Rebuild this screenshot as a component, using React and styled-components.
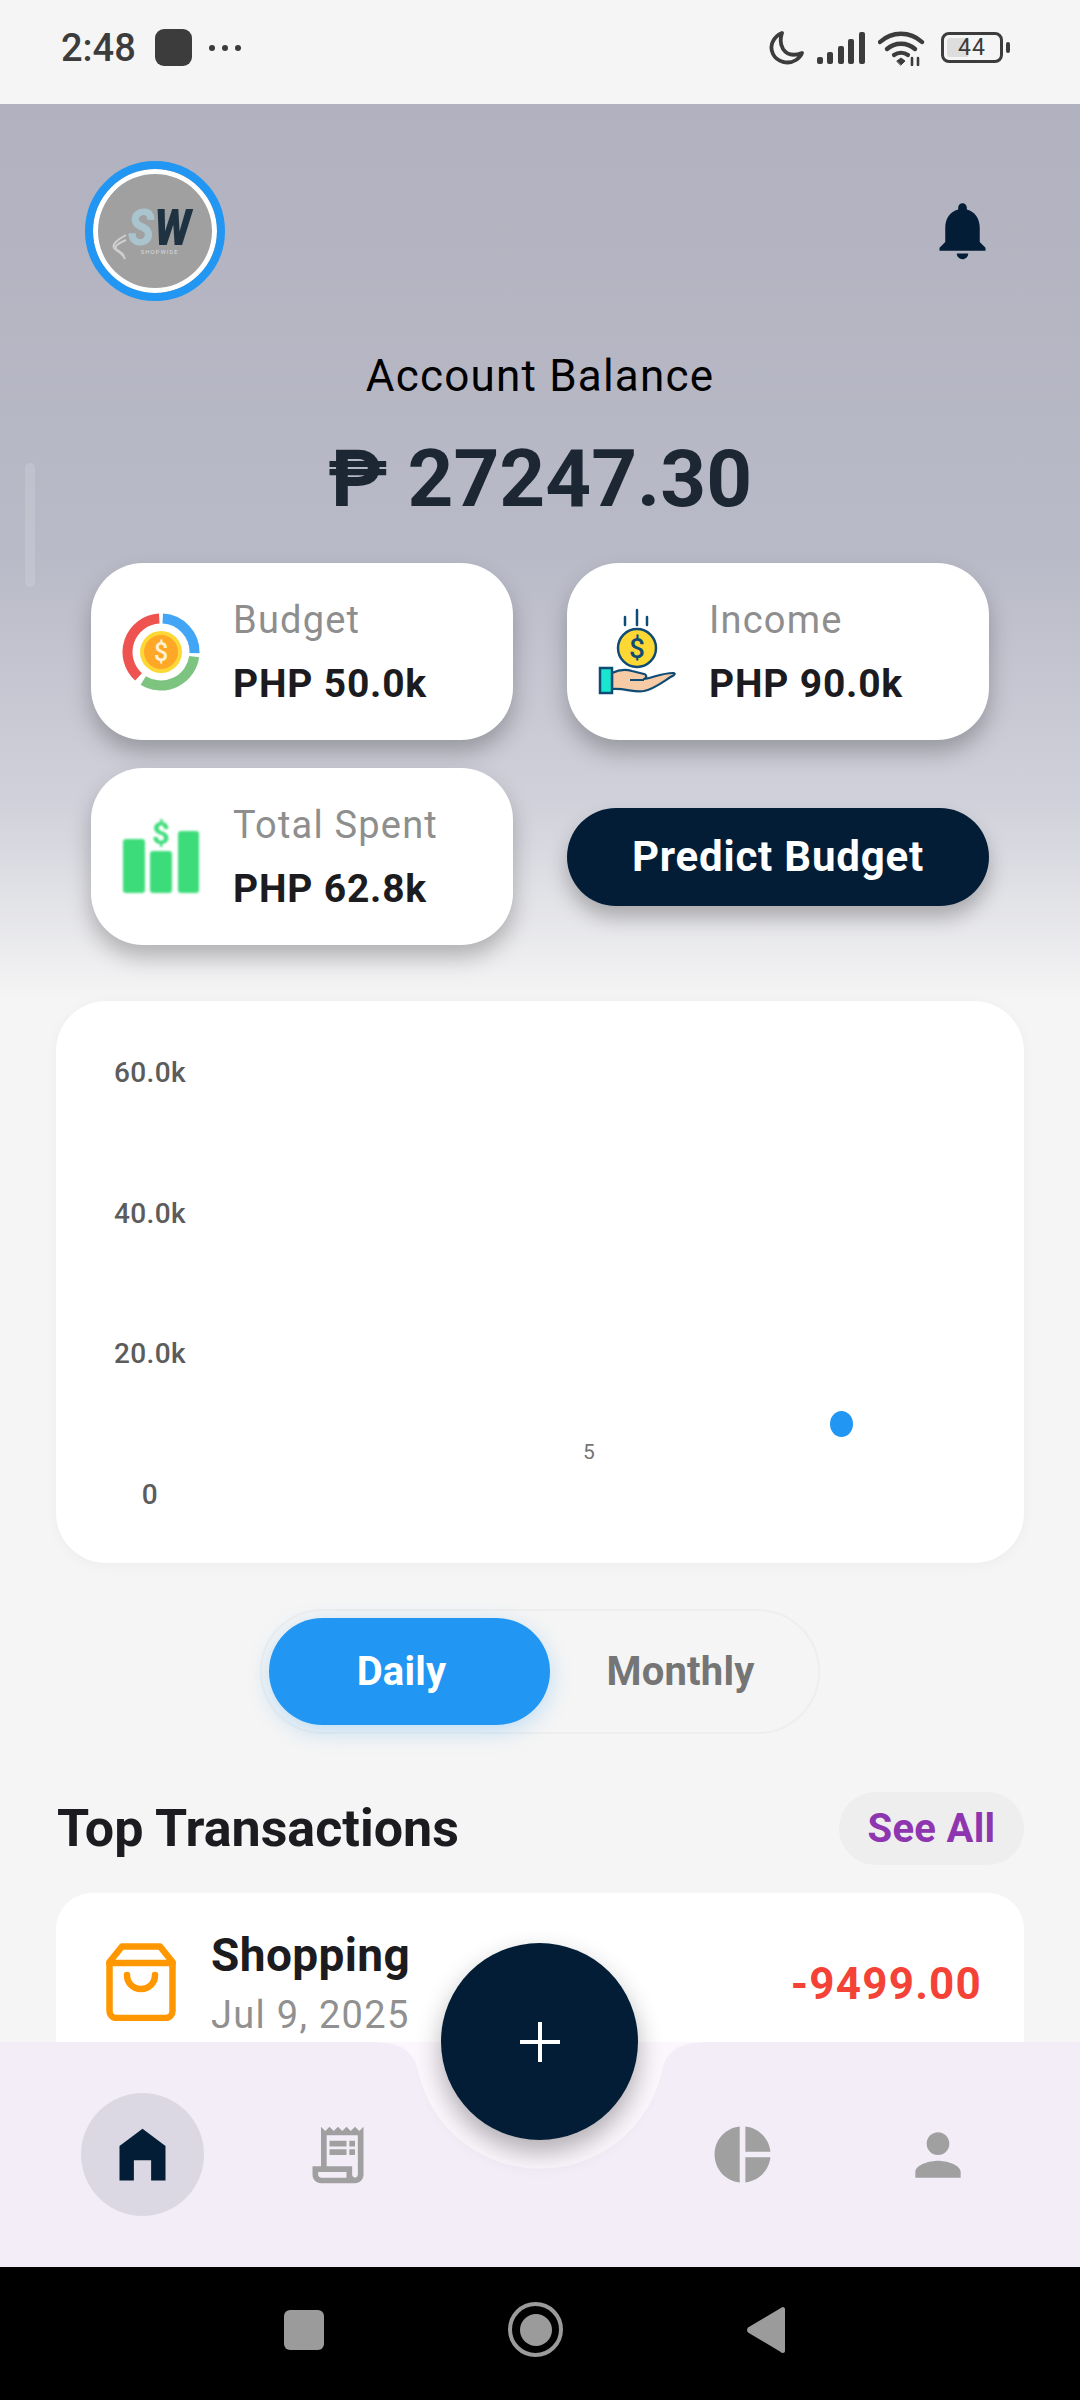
import React from "react";
import styled, { createGlobalStyle } from "styled-components";
import { MdOutlineReceiptLong, MdPieChart, MdPerson, MdNotifications } from "react-icons/md";

const GlobalStyle = createGlobalStyle`
  html, body {
    margin: 0;
    padding: 0;
    background: #f5f5f5;
  }
  * {
    box-sizing: border-box;
  }
`;

// polar arc helper for the budget donut
function arc(cx, cy, r, from, to) {
  const pt = (deg) => {
    const rad = ((deg - 90) * Math.PI) / 180;
    return [cx + r * Math.cos(rad), cy + r * Math.sin(rad)];
  };
  const [x1, y1] = pt(from);
  const [x2, y2] = pt(to);
  const large = to - from > 180 ? 1 : 0;
  return `M${x1} ${y1}A${r} ${r} 0 ${large} 1 ${x2} ${y2}`;
}

function BudgetIcon() {
  return (
    <svg width="78" height="78" viewBox="0 0 78 78">
      <path d={arc(39, 39, 33.5, 3, 92)} fill="none" stroke="#42a5f5" strokeWidth="10" />
      <path d={arc(39, 39, 33.5, 98, 212)} fill="none" stroke="#7cc47f" strokeWidth="10" />
      <path d={arc(39, 39, 33.5, 222, 357)} fill="none" stroke="#ef5350" strokeWidth="10" />
      <circle cx="39" cy="39" r="21" fill="#fdd835" />
      <circle cx="39" cy="39" r="17" fill="#ffa726" />
      <text x="39" y="48" textAnchor="middle" fontFamily="Roboto" fontSize="25" fontWeight="500" fill="#fff3d6">$</text>
    </svg>
  );
}

function IncomeIcon() {
  return (
    <svg width="78" height="88" viewBox="0 0 78 88">
      <g stroke="#0f4c75" strokeWidth="2.5" strokeLinecap="round" fill="none">
        <path d="M27 9v8M39 2v15M49 9v8" />
      </g>
      <circle cx="39" cy="40" r="19" fill="#fdd835" stroke="#0f4c75" strokeWidth="2.5" />
      <text x="39" y="50" textAnchor="middle" fontFamily="Roboto" fontSize="28" fontWeight="500" fill="#0f4c75">$</text>
      <path
        d="M14 65c8-4 14-4 20-2l12 3c3 1 3 4 0 5 8-1 18-6 29-6 2 0 2 1 1 2-9 5-19 14-30 16-10 2-18-3-32-2z"
        fill="#f6cba6"
        stroke="#0f4c75"
        strokeWidth="2.2"
        strokeLinejoin="round"
      />
      <path d="M32 72h14" stroke="#0f4c75" strokeWidth="2" fill="none" />
      <rect x="2" y="60" width="12" height="25" fill="#19e6cf" stroke="#0f4c75" strokeWidth="2.5" />
    </svg>
  );
}

function SpentIcon() {
  return (
    <SoftSvg width="78" height="76" viewBox="0 0 78 76">
      <rect x="1" y="20" width="22" height="54" rx="3" fill="#3ddc7a" />
      <rect x="28" y="32" width="22" height="42" rx="3" fill="#3ddc7a" />
      <rect x="56" y="12" width="21" height="62" rx="3" fill="#3ddc7a" />
      <text x="39" y="25" textAnchor="middle" fontFamily="Roboto" fontSize="31" fontWeight="700" fill="#3ddc7a">$</text>
    </SoftSvg>
  );
}

function BagIcon() {
  return (
    <BagSvg width="70" height="78" viewBox="0 0 70 78" fill="none" stroke="#ff9800" strokeWidth="6.5" strokeLinejoin="round" strokeLinecap="round">
      <path d="M16 3.500h38L66.500 19v49c0 4-3 7-7 7h-49c-4 0-7-3-7-7V19z" />
      <path d="M3.500 20h63" />
      <path d="M21 32c0 8 6 14 14 14s14-6 14-14" />
    </BagSvg>
  );
}

export default function App() {
  return (
    <Screen>
      <GlobalStyle />
      <StatusBar>
        <StatusLeft>
          <Clock>2:48</Clock>
          <AppBadge />
          <Dots>
            <Dot />
            <Dot />
            <Dot />
          </Dots>
        </StatusLeft>
        <StatusRight>
          <svg width="36" height="36" viewBox="0 0 36 36" fill="none">
            <path d="M14 3C5 7 1 16 5 24c4 8 15 11 23 6 3-2 5-4 6-7-8 3-15 2-19-4-3-5-3-10-1-16z" stroke="#3c3c3c" strokeWidth="3.8" strokeLinejoin="round" />
          </svg>
          <svg width="48" height="32" viewBox="0 0 48 32">
            <rect x="0" y="25" width="6" height="7" rx="2" fill="#3c3c3c" />
            <rect x="10" y="20" width="6" height="12" rx="2" fill="#3c3c3c" />
            <rect x="21" y="14" width="6" height="18" rx="2" fill="#3c3c3c" />
            <rect x="31" y="7" width="6" height="25" rx="2" fill="#3c3c3c" />
            <rect x="42" y="0" width="6" height="32" rx="2" fill="#3c3c3c" />
          </svg>
          <svg width="47" height="36" viewBox="0 0 47 36" fill="none" stroke="#3c3c3c" strokeLinecap="round">
            <path d="M2 12C14 1 32 1 44 12" strokeWidth="4.4" />
            <path d="M9 19c8-7 20-7 28 0" strokeWidth="4.4" />
            <path d="M16 25c4-3 10-3 14 0" strokeWidth="4.2" />
            <path d="M19 31l4-3 4 3-4 4z" fill="#3c3c3c" strokeWidth="1" />
            <path d="M34 35v-7M40 35v-7" strokeWidth="2.6" />
          </svg>
          <Battery>
            <BatteryBody>
              <BatteryFill />
              <BatteryText>44</BatteryText>
            </BatteryBody>
            <BatteryTip />
          </Battery>
        </StatusRight>
      </StatusBar>

      <ScrollArea>
        <ScrollThumb />
        <Header>
          <TopRow>
            <Avatar>
              <Logo>
                <LogoLetters>
                  <LogoS>S</LogoS>
                  <LogoW>W</LogoW>
                </LogoLetters>
                <LogoName>SHOPWISE</LogoName>
                <Swoosh width="18" height="26" viewBox="0 0 18 26" fill="none" stroke="#cfcfcf" strokeWidth="2">
                  <path d="M15 1C6 6 1 10 3 14c2 3 8 4 11 11" />
                  <path d="M15 6C8 9 3 12 5 15c2 2 6 3 8 7" />
                </Swoosh>
              </Logo>
            </Avatar>
            <BellWrap>
              <MdNotifications size={69} color="#031d36" />
            </BellWrap>
          </TopRow>
          <BalanceLabel>Account Balance</BalanceLabel>
          <BalanceValue>₱ 27247.30</BalanceValue>
          <StatGrid>
            <StatCard>
              <StatIcon><BudgetIcon /></StatIcon>
              <StatText>
                <StatLabel>Budget</StatLabel>
                <StatValue>PHP 50.0k</StatValue>
              </StatText>
            </StatCard>
            <StatCard>
              <StatIcon><IncomeIcon /></StatIcon>
              <StatText>
                <StatLabel>Income</StatLabel>
                <StatValue>PHP 90.0k</StatValue>
              </StatText>
            </StatCard>
            <StatCard>
              <StatIcon><SpentIcon /></StatIcon>
              <StatText>
                <StatLabel>Total Spent</StatLabel>
                <StatValue>PHP 62.8k</StatValue>
              </StatText>
            </StatCard>
            <PredictButton>Predict Budget</PredictButton>
          </StatGrid>
        </Header>

        <ChartCard>
          <YAxis>
            <YLabel>60.0k</YLabel>
            <YLabel>40.0k</YLabel>
            <YLabel>20.0k</YLabel>
            <YLabel>0</YLabel>
          </YAxis>
          <XLabel>5</XLabel>
          <ChartDot />
        </ChartCard>

        <Toggle>
          <ToggleOption $active>Daily</ToggleOption>
          <ToggleOption>Monthly</ToggleOption>
        </Toggle>

        <SectionHead>
          <SectionTitle>Top Transactions</SectionTitle>
          <SeeAll>See All</SeeAll>
        </SectionHead>

        <TransactionCard>
          <TransactionInfo>
            <BagIcon />
            <TransactionText>
              <TransactionName>Shopping</TransactionName>
              <TransactionDate>Jul 9, 2025</TransactionDate>
            </TransactionText>
          </TransactionInfo>
          <TransactionAmount>-9499.00</TransactionAmount>
        </TransactionCard>
      </ScrollArea>

      <BottomNav>
        <NotchShape width="340" height="130" viewBox="0 0 340 130">
          <path d="M0 0C30 0 44 8 48 29A125 125 0 0 0 292 29C296 8 310 0 340 0z" fill="#fcf6fd" />
        </NotchShape>
        <Fab>
          <svg width="42" height="42" viewBox="0 0 42 42" stroke="#fff" strokeWidth="4">
            <path d="M21 1v40M1 21h40" />
          </svg>
        </Fab>
        <NavGroup>
          <NavItem $active>
            <svg width="69" height="69" viewBox="0 0 24 24" fill="#031d36">
              <path d="M12 3L4 9v12h5v-7h6v7h5V9z" />
            </svg>
          </NavItem>
          <NavItem>
            <MdOutlineReceiptLong size={68} />
          </NavItem>
        </NavGroup>
        <NavGroup>
          <NavItem>
            <MdPieChart size={67} />
          </NavItem>
          <NavItem>
            <MdPerson size={68} />
          </NavItem>
        </NavGroup>
      </BottomNav>

      <SystemBar>
        <SysSquare />
        <SysCircle />
        <svg width="38" height="46" viewBox="0 0 38 46" fill="#9b9b9b">
          <path d="M36 0c1 0 2 1 2 2v42c0 1-1 2-2 2-1 0-2-.5-3-1.500L1 25.500c-1.300-1.500-1.300-3.500 0-5L33 1.500C34 .5 35 0 36 0z" />
        </svg>
      </SystemBar>
    </Screen>
  );
}

const Screen = styled.div`
  position: relative;
  width: 1080px;
  height: 2400px;
  display: flex;
  flex-direction: column;
  overflow: hidden;
  background: #f5f5f5;
  font-family: "Roboto", "Liberation Sans", sans-serif;
`;

const StatusBar = styled.div`
  height: 104px;
  flex-shrink: 0;
  display: flex;
  justify-content: space-between;
  align-items: flex-start;
  padding: 29px 70px 0 61px;
  background: #f5f5f5;
`;

const StatusLeft = styled.div`
  display: flex;
  align-items: center;
  height: 37px;
`;

const Clock = styled.span`
  font-size: 38px;
  font-weight: 500;
  color: #3c3c3c;
  line-height: 39px;
  padding-top: 2px;
`;

const AppBadge = styled.div`
  width: 37px;
  height: 37px;
  margin-left: 19px;
  border-radius: 9px;
  background: #3c3c3c;
`;

const Dots = styled.div`
  display: flex;
  gap: 7px;
  margin-left: 17px;
`;

const Dot = styled.span`
  width: 6px;
  height: 6px;
  border-radius: 50%;
  background: #3c3c3c;
`;

const StatusRight = styled.div`
  display: flex;
  align-items: center;
  gap: 13px;
  height: 37px;
`;

const Battery = styled.div`
  display: flex;
  align-items: center;
  gap: 3px;
  margin-left: 3px;
`;

const BatteryBody = styled.div`
  position: relative;
  width: 62px;
  height: 31px;
  border: 3px solid #3c3c3c;
  border-radius: 8px;
  display: flex;
  align-items: center;
  justify-content: center;
`;

const BatteryFill = styled.div`
  position: absolute;
  left: 3px;
  top: 3px;
  bottom: 3px;
  width: 22px;
  border-radius: 3px;
  background: #dddddd;
`;

const BatteryText = styled.span`
  position: relative;
  font-size: 23px;
  line-height: 1;
  color: #3c3c3c;
  letter-spacing: 1px;
`;

const BatteryTip = styled.div`
  width: 4px;
  height: 11px;
  border-radius: 2px;
  background: #3c3c3c;
`;

const ScrollArea = styled.div`
  position: relative;
  flex: 1;
  min-height: 0;
  overflow: hidden;
`;

const ScrollThumb = styled.div`
  position: absolute;
  left: 25px;
  top: 359px;
  width: 10px;
  height: 124px;
  border-radius: 5px;
  background: rgba(255, 255, 255, 0.13);
`;

const Header = styled.div`
  height: 897px;
  padding-top: 57px;
  background: linear-gradient(180deg, #b2b1bf 0%, #b9bac7 50%, #d0d1da 78%, #f5f5f5 100%);
`;

const TopRow = styled.div`
  display: flex;
  justify-content: space-between;
  align-items: center;
  padding: 0 83px 0 85px;
  height: 140px;
`;

const BellWrap = styled.div`
  display: flex;
  margin-bottom: 2px;
`;

const Avatar = styled.div`
  width: 140px;
  height: 140px;
  border-radius: 50%;
  border: 8px solid #2196f3;
  display: flex;
  align-items: center;
  justify-content: center;
  background: #a0a0a0;
  box-shadow: inset 0 0 0 5px #ffffff;
`;

const Logo = styled.div`
  position: relative;
  display: flex;
  flex-direction: column;
  align-items: center;
  margin-left: 9px;
  margin-top: 2px;
`;

const LogoLetters = styled.div`
  display: flex;
  font-size: 50px;
  line-height: 40px;
  font-weight: 900;
  font-style: italic;
  transform: scaleX(0.87);
`;

const LogoS = styled.span`
  color: #a9c4cd;
`;

const LogoW = styled.span`
  color: #1f3242;
`;

const LogoName = styled.span`
  font-size: 6px;
  line-height: 8px;
  letter-spacing: 1px;
  color: #d5dcdf;
`;

const Swoosh = styled.svg`
  position: absolute;
  left: -12px;
  top: 26px;
`;

const BalanceLabel = styled.div`
  margin-top: 49px;
  text-align: center;
  font-size: 44px;
  line-height: 52px;
  letter-spacing: 1.2px;
  color: #000000;
`;

const BalanceValue = styled.div`
  margin-top: 30px;
  text-align: center;
  font-size: 80px;
  line-height: 94px;
  font-weight: 700;
  color: #1c2733;
`;

const StatGrid = styled.div`
  display: grid;
  grid-template-columns: 422px 422px;
  grid-auto-rows: 177px;
  column-gap: 54px;
  row-gap: 28px;
  align-items: center;
  margin: 37px 91px 0;
`;

const StatCard = styled.div`
  height: 177px;
  display: flex;
  align-items: center;
  gap: 33px;
  padding-left: 31px;
  border-radius: 52px;
  background: #ffffff;
  box-shadow: 0 12px 22px rgba(0, 0, 0, 0.25);
`;

const StatIcon = styled.div`
  width: 78px;
  flex-shrink: 0;
  display: flex;
  justify-content: center;
`;

const SoftSvg = styled.svg`
  filter: blur(0.8px);
`;

const StatText = styled.div`
  display: flex;
  flex-direction: column;
  gap: 20px;
`;

const StatLabel = styled.span`
  font-size: 38px;
  line-height: 44px;
  letter-spacing: 1.2px;
  color: #8e8e8e;
`;

const StatValue = styled.span`
  font-size: 39px;
  line-height: 44px;
  font-weight: 700;
  letter-spacing: 0.8px;
  color: #1c1b20;
`;

const PredictButton = styled.div`
  height: 98px;
  display: flex;
  align-items: center;
  justify-content: center;
  border-radius: 49px;
  background: #031d36;
  color: #ffffff;
  font-size: 42px;
  font-weight: 700;
  letter-spacing: 0.8px;
  box-shadow: 0 12px 20px rgba(0, 0, 0, 0.25);
`;

const ChartCard = styled.div`
  position: relative;
  height: 562px;
  margin: 0 56px;
  padding: 52px 0 48px 57px;
  border-radius: 50px;
  background: #ffffff;
  box-shadow: 0 2px 14px rgba(0, 0, 0, 0.04);
`;

const YAxis = styled.div`
  width: 74px;
  height: 100%;
  display: flex;
  flex-direction: column;
  justify-content: space-between;
`;

const YLabel = styled.span`
  text-align: center;
  font-size: 28px;
  line-height: 40px;
  font-weight: 500;
  letter-spacing: 0.4px;
  color: #5c5c5c;
`;

const XLabel = styled.span`
  position: absolute;
  left: 527px;
  top: 439px;
  font-size: 21px;
  line-height: 25px;
  color: #757575;
`;

const ChartDot = styled.div`
  position: absolute;
  left: 774px;
  top: 410px;
  width: 23px;
  height: 26px;
  border-radius: 50%;
  background: #2196f3;
`;

const Toggle = styled.div`
  width: 560px;
  height: 125px;
  margin: 46px auto 0;
  padding: 7px;
  display: flex;
  border: 2px solid #eeeeee;
  border-radius: 63px;
`;

const ToggleOption = styled.div`
  width: ${(p) => (p.$active ? "282px" : "262px")};
  padding-right: ${(p) => (p.$active ? "16px" : "0")};
  display: flex;
  align-items: center;
  justify-content: center;
  border-radius: 54px;
  font-size: 40px;
  font-weight: 700;
  letter-spacing: 0.2px;
  color: ${(p) => (p.$active ? "#ffffff" : "#757575")};
  background: ${(p) => (p.$active ? "#2196f3" : "transparent")};
  box-shadow: ${(p) => (p.$active ? "0 6px 22px rgba(33, 150, 243, 0.25)" : "none")};
`;

const SectionHead = styled.div`
  display: flex;
  justify-content: space-between;
  align-items: center;
  margin: 58px 56px 0 57px;
`;

const SectionTitle = styled.div`
  font-size: 52px;
  line-height: 60px;
  font-weight: 700;
  color: #1c1b20;
`;

const SeeAll = styled.div`
  width: 185px;
  height: 73px;
  display: flex;
  align-items: center;
  justify-content: center;
  border-radius: 37px;
  background: #eeeeee;
  color: #8e35b0;
  font-size: 40px;
  font-weight: 700;
  letter-spacing: 0.3px;
`;

const TransactionCard = styled.div`
  height: 200px;
  margin: 28px 56px 0;
  padding: 36px 42px 0 50px;
  display: flex;
  justify-content: space-between;
  align-items: flex-start;
  border-radius: 36px;
  background: #ffffff;
`;

const TransactionInfo = styled.div`
  display: flex;
  align-items: center;
  gap: 35px;
`;

const BagSvg = styled.svg`
  margin-top: -4px;
`;

const TransactionText = styled.div`
  display: flex;
  flex-direction: column;
  gap: 11px;
`;

const TransactionName = styled.span`
  font-size: 46px;
  line-height: 52px;
  font-weight: 700;
  letter-spacing: 0.4px;
  color: #1c1b20;
`;

const TransactionDate = styled.span`
  font-size: 38px;
  line-height: 46px;
  letter-spacing: 1.3px;
  color: #909090;
`;

const TransactionAmount = styled.span`
  margin-top: 29px;
  font-size: 44px;
  line-height: 52px;
  font-weight: 700;
  letter-spacing: 1.2px;
  color: #f44336;
`;

const BottomNav = styled.div`
  position: relative;
  height: 225px;
  flex-shrink: 0;
  display: flex;
  justify-content: space-between;
  align-items: flex-start;
  padding: 51px 81px 0;
  background: #f3edf8;
`;

const NotchShape = styled.svg`
  position: absolute;
  left: 370px;
  top: 0;
`;

const Fab = styled.div`
  position: absolute;
  left: 441px;
  top: -99px;
  width: 197px;
  height: 197px;
  border-radius: 50%;
  display: flex;
  align-items: center;
  justify-content: center;
  background: #031d36;
  box-shadow: 0 12px 26px rgba(0, 0, 0, 0.3);
`;

const NavGroup = styled.div`
  display: flex;
  gap: 72px;
`;

const NavItem = styled.div`
  width: 123px;
  height: 123px;
  border-radius: 50%;
  display: flex;
  align-items: center;
  justify-content: center;
  color: #a0a0a0;
  background: ${(p) => (p.$active ? "#dbd8e3" : "transparent")};
`;

const SystemBar = styled.div`
  height: 133px;
  flex-shrink: 0;
  display: flex;
  align-items: center;
  justify-content: flex-start;
  gap: 184px;
  padding: 0 0 8px 284px;
  background: #000000;
`;

const SysSquare = styled.div`
  width: 40px;
  height: 40px;
  border-radius: 6px;
  background: #9b9b9b;
`;

const SysCircle = styled.div`
  width: 55px;
  height: 55px;
  border-radius: 50%;
  border: 4px solid #9b9b9b;
  display: flex;
  align-items: center;
  justify-content: center;
  &::after {
    content: "";
    width: 32px;
    height: 32px;
    border-radius: 50%;
    background: #9b9b9b;
  }
`;
